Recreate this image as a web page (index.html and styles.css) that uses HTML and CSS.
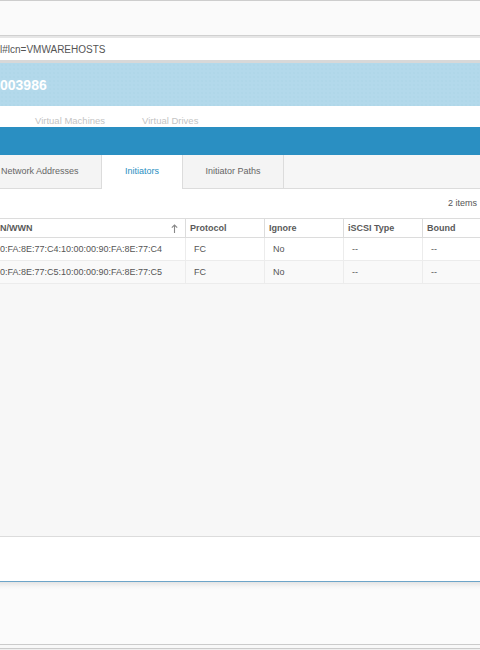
FILE: index.html
```html
<!DOCTYPE html>
<html lang="en">
<head>
    <meta charset="UTF-8">
    <title>Server 003986 - Initiators</title>
    <link rel="stylesheet" href="styles.css">
</head>
<body>
    <div class="titlebar"></div>
    <div class="addressbar">l#lcn=VMWAREHOSTS</div>

    <div class="banner">003986</div>
    <div class="subnav">
        <span class="subnav-item first">Virtual Machines</span>
        <span class="subnav-item">Virtual Drives</span>
    </div>
    <div class="bluebar"></div>

    <div class="tabs">
        <div class="tab first">Network Addresses</div>
        <div class="tab active">Initiators</div>
        <div class="tab">Initiator Paths</div>
    </div>

    <div class="content">
        <div class="items">2 items</div>
        <div class="grid">
            <div class="grid-row head">
                <div class="cell first">N/WWN
                    <svg class="sort" width="7" height="9" viewBox="0 0 7 9">
                        <path d="M3.5 1 V9 M0.8 3.6 L3.5 1 L6.2 3.6" fill="none" stroke="#888" stroke-width="1.1"/>
                    </svg>
                </div>
                <div class="cell">Protocol</div>
                <div class="cell">Ignore</div>
                <div class="cell">iSCSI Type</div>
                <div class="cell">Bound</div>
            </div>
            <div class="grid-row">
                <div class="cell first">0:FA:8E:77:C4:10:00:00:90:FA:8E:77:C4</div>
                <div class="cell">FC</div>
                <div class="cell">No</div>
                <div class="cell">--</div>
                <div class="cell">--</div>
            </div>
            <div class="grid-row alt">
                <div class="cell first">0:FA:8E:77:C5:10:00:00:90:FA:8E:77:C5</div>
                <div class="cell">FC</div>
                <div class="cell">No</div>
                <div class="cell">--</div>
                <div class="cell">--</div>
            </div>
        </div>
    </div>

    <div class="footer"></div>
    <div class="statusbar"></div>
    <div class="edge"></div>
</body>
</html>
```

FILE: styles.css
```css
body, html {
    margin: 0;
    padding: 0;
    width: 480px;
    height: 650px;
    overflow: hidden;
    background: #efefef;
    font-family: "Liberation Sans", Arial, sans-serif;
}

.titlebar {
    height: 34px;
    background: #fafafa;
    border-top: 1px solid #cdcdcd;
    border-bottom: 1px solid #d0d0d0;
}

.addressbar {
    height: 22px;
    line-height: 23px;
    background: #fff;
    border-top: 2px solid #e6e6e6;
    border-bottom: 3px solid #d8d8d8;
    font-size: 10px;
    color: #555;
    white-space: nowrap;
}

.banner {
    height: 43px;
    line-height: 45px;
    background-color: #b3d9eb;
    background-image: radial-gradient(#abd3e6 0.6px, transparent 0.8px);
    background-size: 4px 4px;
    color: #fff;
    font-size: 14px;
    font-weight: bold;
}

.subnav {
    height: 21px;
    background: #fff;
    display: flex;
    align-items: flex-end;
    font-size: 9.5px;
    color: #c4c4c4;
}

.subnav-item {
    line-height: 12px;
    margin-right: 37px;
}

.subnav-item.first {
    margin-left: 35px;
}

.bluebar {
    height: 28px;
    background: #2a8fc2;
}

.tabs {
    height: 33px;
    display: flex;
    background: #f6f6f6;
    border-bottom: 1px solid #dcdcdc;
    font-size: 9px;
    color: #666;
}

.tab {
    box-sizing: border-box;
    height: 33px;
    line-height: 33px;
    text-align: center;
    white-space: nowrap;
    background: #f4f4f4;
    border-right: 1px solid #dcdcdc;
}

.tab.first {
    width: 102px;
    padding-left: 1px;
    text-align: left;
}

.tab.active {
    width: 80px;
    height: 34px;
    background: #fff;
    color: #2a8fc2;
    border-right: none;
}

.tab.active + .tab {
    width: 102px;
    border-left: 1px solid #dcdcdc;
}

.content {
    height: 347px;
    display: flex;
    flex-direction: column;
    background: #fff;
}

.items {
    height: 29px;
    line-height: 29px;
    text-align: right;
    padding-right: 3px;
    font-size: 9px;
    color: #555;
}

.grid {
    flex: 1;
    background: #f7f7f7;
    border-top: 1px solid #dcdcdc;
}

.grid-row {
    display: grid;
    grid-template-columns: 186px 79px 79px 79px 1fr;
    height: 23px;
    box-sizing: border-box;
    background: #fff;
    border-bottom: 1px solid #ececec;
    font-size: 9px;
    color: #555;
}

.grid-row.alt {
    background: #f9f9f9;
}

.grid-row.head {
    height: 19px;
    border-bottom: 1px solid #dcdcdc;
    font-weight: bold;
    color: #5a5a5a;
}

.cell {
    box-sizing: border-box;
    padding-left: 8px;
    display: flex;
    align-items: center;
    white-space: nowrap;
    overflow: hidden;
    border-right: 1px solid #ececec;
}

.head .cell {
    padding-left: 4px;
    border-right-color: #dcdcdc;
}

.cell.first,
.head .cell.first {
    padding-left: 0;
}

.cell:last-child {
    border-right: none;
}

.sort {
    margin-left: auto;
    margin-right: 7px;
}

.footer {
    height: 44px;
    background: #fff;
    border-top: 1px solid #dcdcdc;
    border-bottom: 1px solid #6ca4c8;
}

.statusbar {
    height: 62px;
    background: linear-gradient(#e4e4e4, #f6f6f6 5px, #fbfbfb 8px);
}

.edge {
    height: 3px;
    background: #f8f8f8;
    border-top: 1px solid #cbcbcb;
    border-bottom: 1px solid #cbcbcb;
}
```
